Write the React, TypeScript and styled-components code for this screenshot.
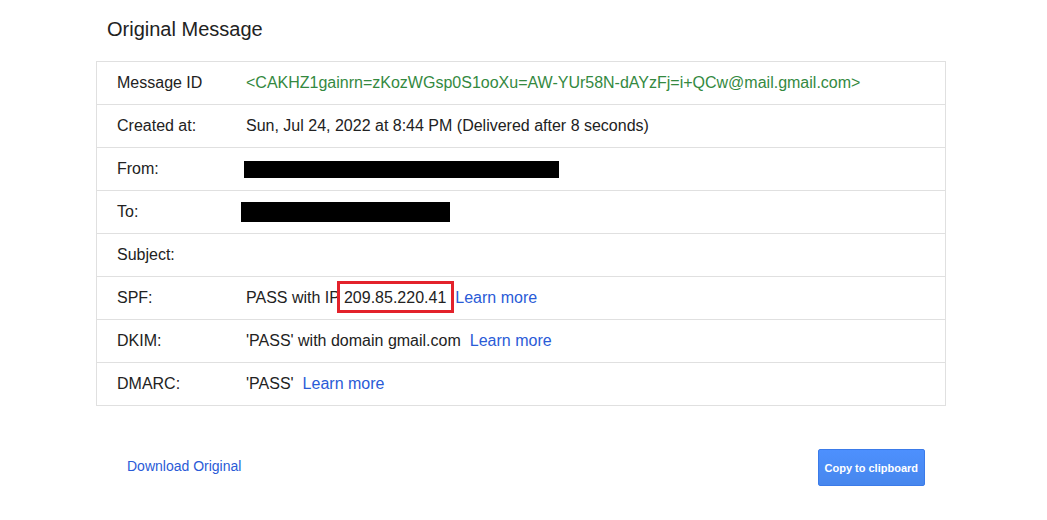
import styled, { createGlobalStyle } from "styled-components";

const GlobalStyle = createGlobalStyle`
  body {
    margin: 0;
    background: #fff;
    font-family: "Liberation Sans", Arial, sans-serif;
    color: #222;
  }
`;

type Row = {
  label: string;
  kind: "id" | "text" | "redacted" | "blank" | "auth";
  value?: string;
  ip?: string;
  redactWidth?: number;
  redactOffset?: number;
  redactHeight?: number;
};

const rows: Row[] = [
  {
    label: "Message ID",
    kind: "id",
    value: "<CAKHZ1gainrn=zKozWGsp0S1ooXu=AW-YUr58N-dAYzFj=i+QCw@mail.gmail.com>",
  },
  {
    label: "Created at:",
    kind: "text",
    value: "Sun, Jul 24, 2022 at 8:44 PM (Delivered after 8 seconds)",
  },
  { label: "From:", kind: "redacted", redactWidth: 315, redactOffset: -2, redactHeight: 17 },
  { label: "To:", kind: "redacted", redactWidth: 209, redactOffset: -5, redactHeight: 20 },
  { label: "Subject:", kind: "blank" },
  { label: "SPF:", kind: "auth", value: "PASS with IP", ip: "209.85.220.41" },
  { label: "DKIM:", kind: "auth", value: "'PASS' with domain gmail.com" },
  { label: "DMARC:", kind: "auth", value: "'PASS'" },
];

const App = () => {
  const renderValue = (row: Row) => {
    switch (row.kind) {
      case "id":
        return <MessageId>{row.value}</MessageId>;
      case "redacted":
        return (
          <Redaction
            style={{
              width: row.redactWidth,
              height: row.redactHeight,
              marginLeft: row.redactOffset,
            }}
          />
        );
      case "blank":
        return null;
      case "auth":
        return (
          <>
            <span>{row.value}</span>
            {row.ip && <Highlight>{row.ip}</Highlight>}
            <LearnMore href="#">Learn more</LearnMore>
          </>
        );
      default:
        return <span>{row.value}</span>;
    }
  };

  return (
    <>
      <GlobalStyle />
      <Page>
        <Title>Original Message</Title>
        <Table>
          {rows.map((row) => (
            <TableRow key={row.label}>
              <Label>{row.label}</Label>
              <Value>{renderValue(row)}</Value>
            </TableRow>
          ))}
        </Table>
        <Footer>
          <DownloadLink href="#">Download Original</DownloadLink>
          <CopyButton>Copy to clipboard</CopyButton>
        </Footer>
      </Page>
    </>
  );
};

export default App;

const Page = styled.div`
  width: 850px;
  margin-left: 96px;
  padding-top: 18px;
`;

const Title = styled.h1`
  margin: 0 0 20px 11px;
  font-size: 20px;
  font-weight: 400;
  line-height: 23px;
  color: #222;
`;

const Table = styled.div`
  border: 1px solid #e0e0e0;
  border-bottom: none;
`;

const TableRow = styled.div`
  display: flex;
  align-items: center;
  height: 42px;
  border-bottom: 1px solid #e0e0e0;
  font-size: 16px;
  line-height: 18px;
`;

const Label = styled.div`
  width: 129px;
  padding-left: 20px;
  flex-shrink: 0;
`;

const Value = styled.div`
  display: flex;
  align-items: center;
  white-space: pre;
`;

const MessageId = styled.span`
  color: #34893f;
`;

const Redaction = styled.div`
  background: #000;
`;

const Highlight = styled.span`
  position: relative;
  margin-left: 4px;

  &::after {
    content: "";
    position: absolute;
    left: -7px;
    right: -8px;
    top: -8px;
    bottom: -6px;
    border: 3px solid #e3222b;
  }
`;

const LearnMore = styled.a`
  margin-left: 9px;
  color: #2a5bd7;
  text-decoration: none;
`;

const Footer = styled.div`
  display: flex;
  align-items: center;
  justify-content: space-between;
  margin-top: 43px;
  padding: 0 21px 0 31px;
`;

const DownloadLink = styled.a`
  margin-top: -3px;
  font-size: 14px;
  color: #2a5bd7;
  text-decoration: none;
`;

const CopyButton = styled.button`
  height: 37px;
  padding: 0 6px;
  border: 1px solid #3b7be9;
  border-radius: 2px;
  background: linear-gradient(#4d90fe, #4787ed);
  color: #fff;
  font-family: "Liberation Sans", Arial, sans-serif;
  font-size: 11px;
  font-weight: 700;
  cursor: pointer;
`;
